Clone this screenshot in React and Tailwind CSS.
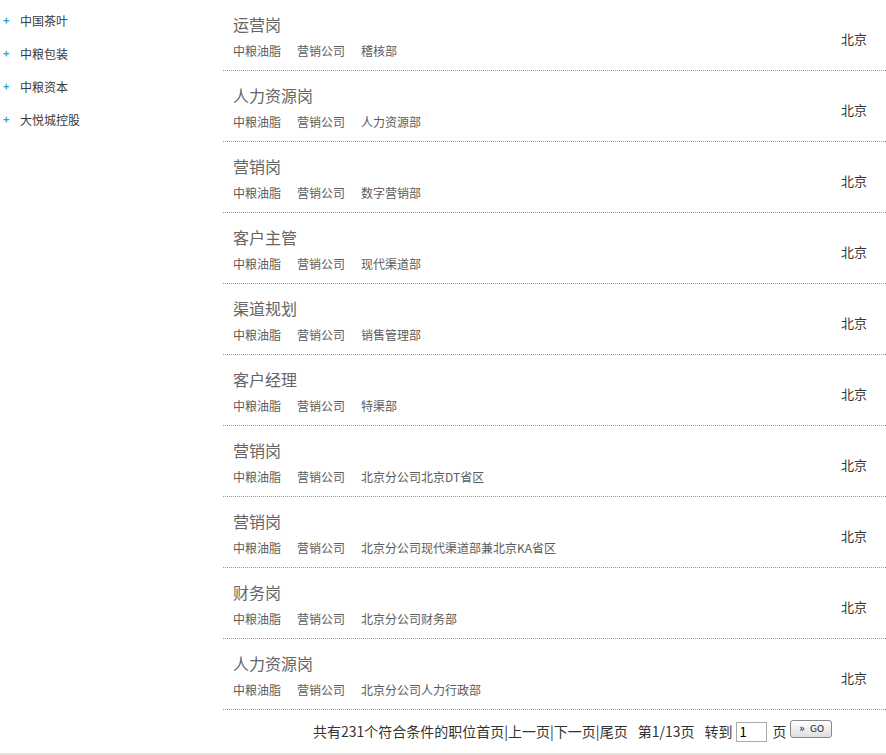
import React from "react";

const cats = ["中国茶叶", "中粮包装", "中粮资本", "大悦城控股"];

const jobs = [
  ["运营岗", "稽核部"],
  ["人力资源岗", "人力资源部"],
  ["营销岗", "数字营销部"],
  ["客户主管", "现代渠道部"],
  ["渠道规划", "销售管理部"],
  ["客户经理", "特渠部"],
  ["营销岗", "北京分公司北京DT省区"],
  ["营销岗", "北京分公司现代渠道部兼北京KA省区"],
  ["财务岗", "北京分公司财务部"],
  ["人力资源岗", "北京分公司人力行政部"],
];

export default function App() {
  return (
    <div
      className="w-[886px] h-[755px] bg-white overflow-hidden flex flex-col"
      style={{ fontFamily: '"Microsoft YaHei", "Noto Sans CJK SC", "Noto Sans", sans-serif' }}
    >
      <div className="flex flex-1">
        <div className="w-[223px] pt-[4px]">
          {cats.map((c) => (
            <div key={c} className="h-[33px] leading-[33px] flex items-center text-[12px] text-[#3a3a3a]">
              <span className="w-[20px] pl-[3px] text-[#2a9fd6] text-[11px] font-bold">+</span>
              <span>{c}</span>
            </div>
          ))}
        </div>
        <div className="flex-1 flex flex-col">
          {jobs.map(([t, d], i) => (
            <div key={i} className="flex border-b border-dotted border-[#999] h-[71px]">
              <div className="flex-1 pl-[10px] pt-[14px]">
                <div className="text-[16px] leading-[20px] text-[#666]">{t}</div>
                <div className="mt-[8px] text-[12px] leading-[18px] text-[#5c5c5c] flex gap-[16px]">
                  <span>中粮油脂</span>
                  <span>营销公司</span>
                  <span>{d}</span>
                </div>
              </div>
              <div className="pt-[30px] pr-[19px] text-[13px] leading-[18px] text-[#333]">北京</div>
            </div>
          ))}
          <div className="h-[43px] flex items-center pl-[90px] text-[14px] text-[#333] whitespace-nowrap">
            <span>共有231个符合条件的职位首页|上一页|下一页|尾页</span>
            <span className="ml-[10px]">第1/13页</span>
            <span className="ml-[10px]">转到</span>
            <input
              readOnly
              value="1"
              className="ml-[4px] w-[31px] h-[20px] border border-[#aaa] text-[13px] leading-[18px] px-[2px] outline-none text-black"
            />
            <span className="ml-[5px]">页</span>
            <span className="ml-[4px] mb-[5px] w-[42px] h-[18px] border border-[#888] rounded-[3px] bg-gradient-to-b from-white to-[#dedede] flex items-center justify-center gap-[5px] text-[10px] leading-none text-[#222]" style={{ fontFamily: '"DejaVu Sans", sans-serif' }}>
              <span className="text-[10px]">»</span>
              <span className="text-[9px]">GO</span>
            </span>
          </div>
        </div>
      </div>
      <div className="h-[2px] bg-[#e4e4d0]" />
    </div>
  );
}
